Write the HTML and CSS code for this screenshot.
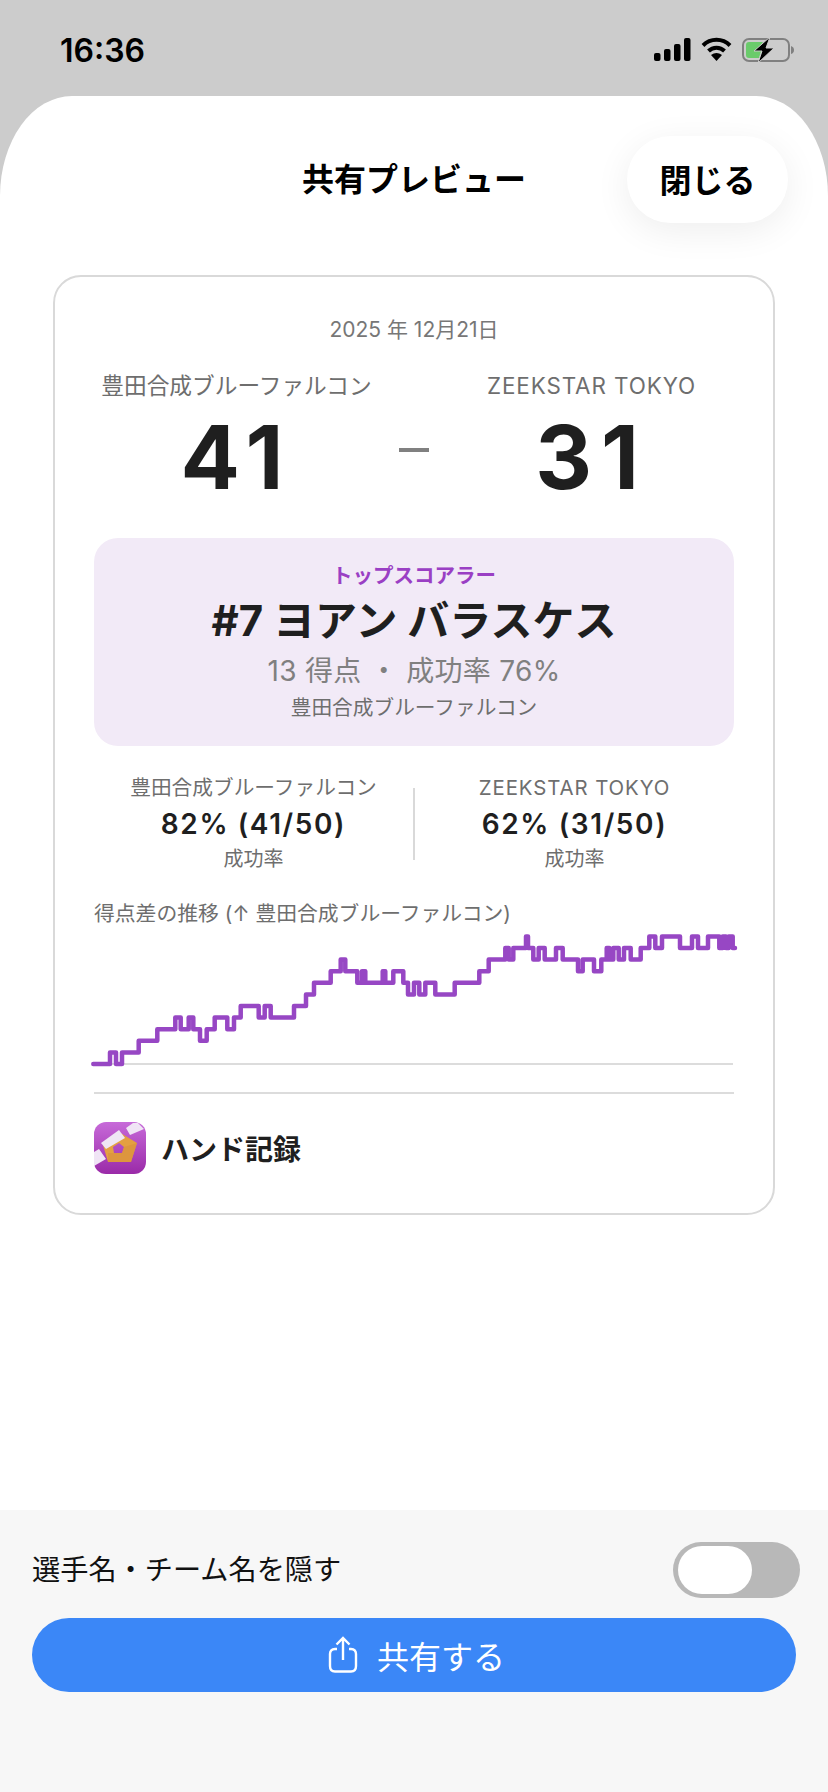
FILE: index.html
```html
<!DOCTYPE html>
<html lang="ja">

<head>
    <meta charset="UTF-8">
    <meta name="viewport" content="width=device-width, initial-scale=1.0">
    <title>共有プレビュー</title>
    <link rel="stylesheet" href="styles.css">
</head>

<body>
    <div class="status-bar">
        <span class="clock">16:36</span>
        <div class="status-icons">
            <svg width="37" height="23" viewBox="0 0 37 23">
                <rect x="0" y="15" width="6.5" height="8" rx="2"/>
                <rect x="10" y="11" width="6.5" height="12" rx="2"/>
                <rect x="20" y="6" width="6.5" height="17" rx="2"/>
                <rect x="30" y="0" width="6.5" height="23" rx="2"/>
            </svg>
            <svg width="31" height="24" viewBox="0 0 31 24">
                <path d="M2 8.5 A19 19 0 0 1 29 8.5" fill="none" stroke="#000" stroke-width="4"/>
                <path d="M7.5 14 A11.5 11.5 0 0 1 23.5 14" fill="none" stroke="#000" stroke-width="4"/>
                <path d="M15.5 24 L10 18 Q15.5 14 21 18 Z"/>
            </svg>
            <svg width="52" height="26" viewBox="0 0 52 26">
                <rect x="1" y="2" width="46" height="22" rx="6" fill="none" stroke="#808080" stroke-width="2"/>
                <path d="M49 9 Q52 10 52 13 Q52 16 49 17 Z" fill="#808080"/>
                <path d="M4 8 Q4 5 7 5 H21 L14 14 H19 L17 21 H7 Q4 21 4 18 Z" fill="#6acb6b"/>
                <path d="M28 0 L12 14 H20 L16 26 L32 11 H24 Z" stroke="#ccc" stroke-width="1"/>
            </svg>
        </div>
    </div>

    <div class="sheet">
        <header class="sheet-header">
            <h1 class="sheet-title">共有プレビュー</h1>
            <button class="close-btn">閉じる</button>
        </header>

        <section class="card">
            <p class="match-date">2025 年 12月21日</p>

            <div class="score-grid">
                <span class="team-name">豊田合成ブルーファルコン</span>
                <span></span>
                <span class="team-name latin">ZEEKSTAR TOKYO</span>
                <span class="score">41</span>
                <span class="score-dash"></span>
                <span class="score">31</span>
            </div>

            <div class="top-scorer">
                <p class="ts-label">トップスコアラー</p>
                <p class="ts-name">#7 ヨアン バラスケス</p>
                <p class="ts-stats">13 得点 ・ 成功率 76%</p>
                <p class="ts-team">豊田合成ブルーファルコン</p>
            </div>

            <div class="rates">
                <div class="rate">
                    <p class="rate-team">豊田合成ブルーファルコン</p>
                    <p class="rate-value">82% (41/50)</p>
                    <p class="rate-label">成功率</p>
                </div>
                <div class="rate-sep"></div>
                <div class="rate">
                    <p class="rate-team latin">ZEEKSTAR TOKYO</p>
                    <p class="rate-value">62% (31/50)</p>
                    <p class="rate-label">成功率</p>
                </div>
            </div>

            <p class="chart-title">得点差の推移 (↑ 豊田合成ブルーファルコン)</p>
            <svg class="chart" width="650" height="140" viewBox="0 0 650 140">
                <line x1="3" y1="134" x2="643" y2="134" stroke="#dcdcdc" stroke-width="2"/>
                <path fill="none" stroke="#9747c4" stroke-width="4.5" stroke-linejoin="round" stroke-linecap="round"
                    d="M3.3 134 H20 V122.4 H26 V134 H32 V122.4 H48.7 V110.8 H67.3 V99.2 H85.3 V87.6 H90.7 V99.2 H98.7 V87.6 H103.3 V99.2 H110 V110.8 H116.7 V99.2 H124.7 V87.6 H137.3 V99.2 H144 V87.6 H150.7 V76 H168.7 V87.6 H174.7 V76 H180.7 V87.6 H204 V76 H216 V64.4 H224 V52.8 H240.7 V41.2 H250.7 V29.6 H255.3 V41.2 H267.3 V52.8 H272 V41.2 H275.3 V52.8 H292.7 V41.2 H295.3 V52.8 H303.3 V41.2 H313.3 V52.8 H318 V64.4 H324 V52.8 H329.3 V64.4 H335.3 V52.8 H345.3 V64.4 H364.7 V52.8 H389.3 V41.2 H398.7 V29.6 H415.3 V18 H418.7 V29.6 H423.3 V18 H436 V6.4 H438 V18 H443.3 V29.6 H448.7 V18 H454.7 V29.6 H466 V18 H472.7 V29.6 H488 V41.2 H492.7 V29.6 H504 V41.2 H511.3 V29.6 H516.7 V18 H519.3 V29.6 H523.3 V18 H528.7 V29.6 H534 V18 H540.7 V29.6 H550.7 V18 H559.3 V6.4 H565.3 V18 H572 V6.4 H590 V18 H602 V6.4 H608 V18 H618 V6.4 H629.3 V18 H632.7 V6.4 H636 V18 H638.7 V6.4 H642.7 V18 H645"/>
            </svg>

            <div class="card-divider"></div>

            <div class="brand">
                <svg width="52" height="52" viewBox="0 0 52 52">
                    <defs>
                        <linearGradient id="logoBg" x1="0" y1="0" x2="0" y2="1">
                            <stop offset="0" stop-color="#c76ad9"/>
                            <stop offset="1" stop-color="#9a2aa8"/>
                        </linearGradient>
                    </defs>
                    <rect width="52" height="52" rx="12" fill="url(#logoBg)"/>
                    <path d="M32 6 L39 1 H44 L50 7 L36 13 Z M0 30 L5 27 L12 37 L0 44 Z" fill="#f0e4f5"/>
                    <path fill-rule="evenodd" d="M25 10 L43 21 L37 40 H14 L9 23 Z M25 21 L19 25 L20 31 H28 L30 25 Z" fill="#e4a041"/>
                    <path d="M14 31 H37 V40 H14 Z M30 25 L43 21 L37 40 L28 31 Z" fill="#d98f3c" opacity=".6"/>
                    <path d="M7 21 L25 8 L31 16 L12 27 Z" fill="#efe6f4"/>
                </svg>
                <span class="brand-name">ハンド記録</span>
            </div>
        </section>

        <footer class="share-panel">
            <div class="toggle-row">
                <span class="toggle-label">選手名・チーム名を隠す</span>
                <div class="toggle"><span class="toggle-thumb"></span></div>
            </div>
            <button class="share-btn">
                <svg width="30" height="37" viewBox="0 0 30 37">
                    <path d="M9 13 H7 Q2 13 2 18 V30 Q2 35.5 7 35.5 H23 Q28 35.5 28 30 V18 Q28 13 23 13 H21" fill="none" stroke="#fff" stroke-width="2.4"/>
                    <path d="M15 24 V2 M8.5 8.5 L15 2 L21.5 8.5" fill="none" stroke="#fff" stroke-width="2.4"/>
                </svg>
                <span>共有する</span>
            </button>
        </footer>
    </div>
</body>

</html>
```

FILE: styles.css
```css
* {
    box-sizing: border-box;
}

html,
body {
    height: 100%;
}

body {
    margin: 0;
    display: flex;
    flex-direction: column;
    overflow: hidden;
    background: #cccccc;
    color: #000;
    font-family: "Inter", "Noto Sans CJK JP", sans-serif;
}

p,
h1 {
    margin: 0;
}

button {
    border: 0;
    font-family: inherit;
    color: inherit;
}

/* status bar */
.status-bar {
    height: 96px;
    flex: none;
    padding: 36px 34px 0 60px;
    display: flex;
    justify-content: space-between;
    align-items: flex-start;
}

.clock {
    font-size: 32px;
    line-height: 30px;
    font-weight: 600;
}

.status-icons {
    display: flex;
    align-items: flex-start;
    gap: 10px;
    padding-top: 1px;
}

.status-icons svg:first-child {
    margin-top: 1px;
}

/* sheet */
.sheet {
    flex: 1;
    display: flex;
    flex-direction: column;
    background: #fff;
    border-radius: 72px 72px 0 0 / 100px 100px 0 0;
    overflow: hidden;
}

.sheet-header {
    display: grid;
    grid-template-columns: 1fr auto 1fr;
    align-items: center;
    padding: 40px 40px 0;
}

.sheet-title {
    grid-column: 2;
    font-size: 32px;
    font-weight: 700;
    line-height: 87px;
}

.close-btn {
    grid-column: 3;
    justify-self: end;
    width: 161px;
    height: 87px;
    padding-bottom: 4px;
    border-radius: 44px;
    background: #fff;
    font-size: 32px;
    font-weight: 700;
    box-shadow: 0 8px 36px rgba(0, 0, 0, 0.07);
}

/* card */
.card {
    margin: 52px 53px 0;
    padding: 37px 39px 39px;
    border: 2px solid #d9d9d9;
    border-radius: 28px;
    background: #fff;
}

.match-date {
    text-align: center;
    font-size: 21px;
    line-height: 32px;
    color: #777;
}

.score-grid {
    margin-top: 24px;
    display: grid;
    grid-template-columns: 1fr 70px 1fr;
    justify-items: center;
    align-items: center;
}

.team-name {
    font-size: 22.7px;
    line-height: 32px;
    color: #6e6e6e;
    white-space: nowrap;
}

.team-name.latin {
    font-size: 22.4px;
    letter-spacing: 0.9px;
}

.score {
    margin-top: 6px;
    font-size: 88px;
    line-height: 99px;
    font-weight: 700;
    letter-spacing: 9px;
    color: #1f1f1f;
}

.score-dash {
    width: 30px;
    height: 4px;
    margin-bottom: 10px;
    background: #808080;
}

/* top scorer */
.top-scorer {
    margin-top: 31px;
    height: 208px;
    padding-top: 24px;
    border-radius: 24px;
    background: #f2eaf7;
    text-align: center;
}

.ts-label {
    font-size: 20.5px;
    line-height: 28px;
    font-weight: 700;
    color: #9a3fc4;
}

.ts-name {
    margin-top: 5px;
    font-size: 42px;
    line-height: 52px;
    font-weight: 700;
    color: #1f1f1f;
}

.ts-stats {
    margin-top: 6px;
    font-size: 28px;
    line-height: 36px;
    letter-spacing: 0.3px;
    color: #808080;
}

.ts-team {
    margin-top: 5px;
    font-size: 20.7px;
    line-height: 28px;
    color: #6e6e6e;
}

/* success rates */
.rates {
    margin-top: 28px;
    display: grid;
    grid-template-columns: 1fr 2px 1fr;
    align-items: center;
    text-align: center;
}

.rate-team {
    font-size: 20.7px;
    line-height: 28px;
    color: #6e6e6e;
}

.rate-team.latin {
    font-size: 20.4px;
    letter-spacing: 0.9px;
}

.rate-value {
    margin-top: 4px;
    font-size: 28px;
    line-height: 36px;
    font-weight: 600;
    letter-spacing: 1.6px;
    color: #1f1f1f;
}

.rate-label {
    margin-top: 3px;
    font-size: 20px;
    line-height: 28px;
    color: #6e6e6e;
}

.rate-sep {
    height: 72px;
    background: #d9d9d9;
}

/* chart */
.chart-title {
    margin-top: 27px;
    font-size: 20.8px;
    line-height: 28px;
    color: #6e6e6e;
}

.chart {
    display: block;
    margin: 2px 0 0 -4px;
}

.card-divider {
    margin-top: 22px;
    height: 2px;
    background: #dcdcdc;
}

.brand {
    margin-top: 28px;
    display: flex;
    align-items: center;
    gap: 15px;
}

.brand svg {
    flex: none;
}

.brand-name {
    font-size: 28px;
    font-weight: 700;
    color: #1f1f1f;
}

/* bottom panel */
.share-panel {
    margin-top: auto;
    height: 282px;
    flex: none;
    padding: 32px 32px 0;
    background: #f7f7f7;
}

.toggle-row {
    display: flex;
    justify-content: space-between;
    align-items: center;
    margin-right: -4px;
}

.toggle-label {
    font-size: 28.2px;
    line-height: 40px;
    color: #111;
}

.toggle {
    width: 127px;
    height: 56px;
    padding: 4px 5px;
    border-radius: 28px;
    background: #b8b8b8;
}

.toggle-thumb {
    display: block;
    width: 74px;
    height: 48px;
    border-radius: 24px;
    background: #fff;
}

.share-btn {
    margin-top: 20px;
    width: 100%;
    height: 74px;
    padding-left: 11px;
    display: flex;
    justify-content: center;
    align-items: center;
    gap: 19px;
    border-radius: 37px;
    background: #3b87f7;
    color: #fff;
    font-size: 32px;
}

.share-btn svg {
    margin-top: -1px;
}
```
